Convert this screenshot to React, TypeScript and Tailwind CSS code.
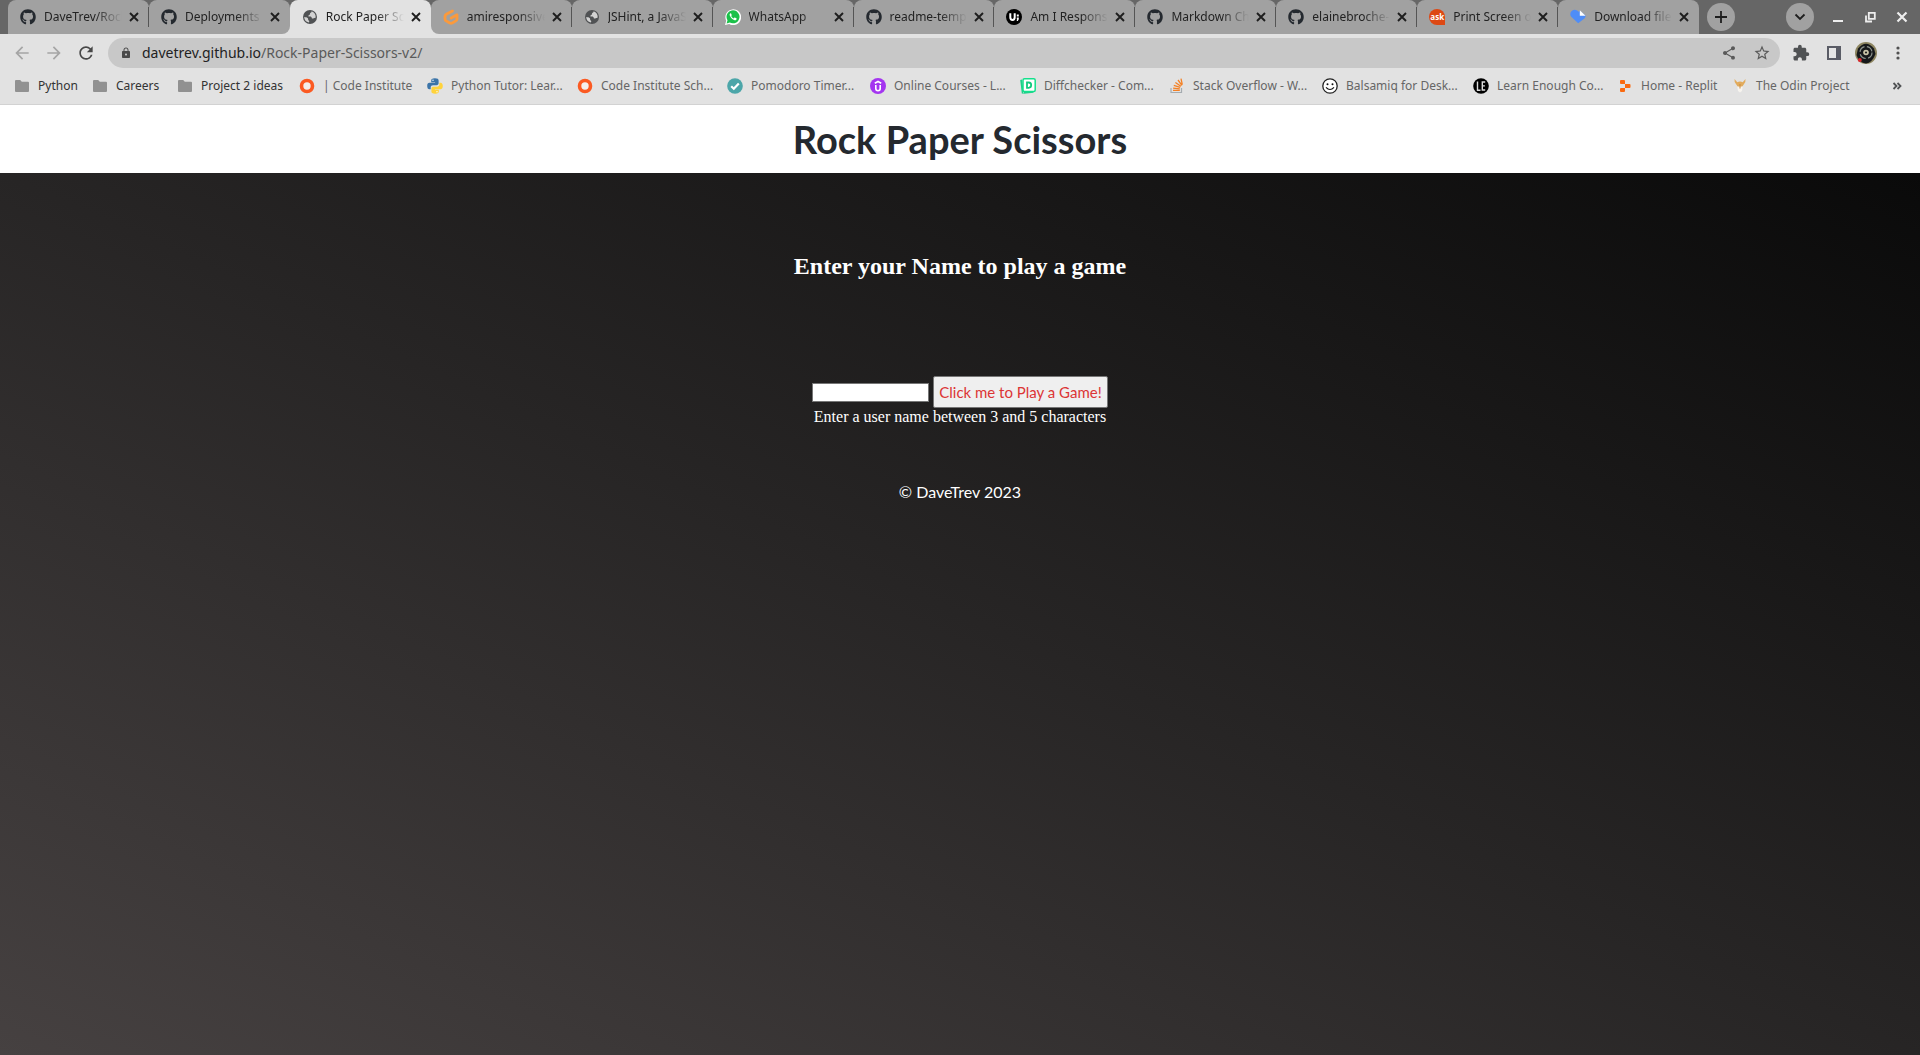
import React from "react";
import { FaGithub } from "react-icons/fa";
import { MdLock, MdShare, MdStarBorder, MdExtension, MdArrowBack, MdArrowForward, MdRefresh } from "react-icons/md";

const Globe = () => (
  <svg viewBox="0 0 16 16" className="size-4">
    <circle cx="8" cy="8" r="7" fill="#505254" />
    <path d="M9.600 2.200c.2 1.300-1 1.300-1.500 2-.4.700.400 1.200-.600 1.600-.9.300-1.200 1-1 1.600.8.300 2-.3 2.800.500.700.800.300 1.500 1 1.700 1 .200 1.600-1 3.300-.9a5.700 5.700 0 0 0-4-6.500zM2.200 8c1.500.300 3 .300 3.700 1.200.600.900-.2 1.700.800 2.300.9.500.5 1.500.2 2A5.900 5.900 0 0 1 2.200 8z" fill="#d2d2d2" />
  </svg>
);
const Github = () => <FaGithub className="size-4 text-[#24292f]" />;
const GitpodMark = () => (
  <svg viewBox="0 0 16 16" className="size-4">
    <path d="M9.500 1.900 3.300 5.200Q2 6 2 7.300v2.600q0 1.400 1.200 2l3.600 2.100q1.200.600 2.400 0l3.600-2.100q1.200-.7 1.200-2V5.800L8.200 9" fill="none" stroke="#fb9a3c" strokeWidth="2.800" strokeLinecap="round" strokeLinejoin="round" />
  </svg>
);
const WhatsApp = () => (
  <svg viewBox="0 0 16 16" className="size-4">
    <path d="M0 16l1.200-4.200A7.900 7.900 0 1 1 4.200 15z" fill="#fff" />
    <path d="M1.600 14.400l.9-3.100a6.500 6.500 0 1 1 2.300 2.200z" fill="#1bc14a" />
    <path d="M5.500 4.300c-.9.400-1.100 1.500-.6 2.500.8 1.900 2.200 3.400 4.200 4.200 1.200.5 2.200.1 2.500-1 .1-.5 0-.6-.3-.8l-1.400-.6c-.3-.1-.4 0-.6.2l-.5.600c-1.200-.4-2.100-1.300-2.600-2.300.7-.7.600-.9.400-1.300l-.5-1.200c-.1-.3-.3-.3-.6-.3z" fill="#fff" />
  </svg>
);
const UiMark = () => (
  <svg viewBox="0 0 16 16" className="size-4">
    <circle cx="8" cy="8" r="8" fill="#000" />
    <path d="M4.300 4.200v4q0 2.700 2.200 2.700t2.200-2.700v-4" fill="none" stroke="#fff" strokeWidth="2" />
    <path d="M10.800 5.500h2v2h-2zM10.800 8.600h2v1.600l-1 1.900h-1.200l.6-1.600h-.4z" fill="#fff" />
  </svg>
);
const AskMark = () => (
  <span className="flex size-4 items-center justify-center rounded-full rounded-br-none bg-[#dd4814] font-['Open_Sans',sans-serif] text-[8px] font-bold text-white">ask</span>
);
const HeartMark = () => (
  <svg viewBox="0 0 16 16" className="size-4">
    <path d="M1.200 2.500Q3 .200 6 1q1.500.400 3 2l.6-1.500 5.900 5q.4 1.200-.8 2.700L8.200 14.300 1.500 8Q-.8 5.500 1.200 2.500z" fill="#4f8df7" />
    <path d="M9.800 1.300v5.400h5.700z" fill="#fff" />
  </svg>
);

const Ring = () => (
  <svg viewBox="0 0 16 16" className="size-4">
    <circle cx="8" cy="8" r="5.500" fill="#f4efec" stroke="#fb5a22" strokeWidth="3.600" />
  </svg>
);
const Folder = () => (
  <svg viewBox="0 0 16 16" className="size-4">
    <path d="M1 3q0-1 1-1h4.200l1.600 1.800H14q1 0 1 1V13q0 1-1 1H2q-1 0-1-1z" fill="#919191" />
  </svg>
);
const Python = () => (
  <svg viewBox="0 0 16 16" className="size-4">
    <path d="M7.900.300c-3 0-3.700 1-3.700 2.200v1.700h3.900v.600H2.400C1 4.800.200 6 .200 8s.8 3.300 2.200 3.300h1.300V9.400c0-1.300 1-2.200 2.300-2.200h3.700c1.100 0 1.900-.8 1.900-1.900V2.500C11.600 1.200 10.600.300 7.900.300z" fill="#3b74a8" />
    <circle cx="6" cy="2.300" r=".7" fill="#fff" />
    <path d="M8.100 15.700c3 0 3.700-1 3.700-2.200v-1.700H7.900v-.6h5.700c1.400 0 2.200-1.200 2.200-3.200s-.8-3.300-2.200-3.300h-1.200v1.900c0 1.300-1 2.200-2.300 2.200H6.300c-1.100 0-1.900.8-1.900 1.900v2.800c0 1.300 1 2.200 3.700 2.200z" fill="#ffd33b" />
    <circle cx="10" cy="13.700" r=".7" fill="#fff" />
  </svg>
);
const Tick = () => (
  <svg viewBox="0 0 16 16" className="size-4">
    <circle cx="8" cy="8" r="7.800" fill="#4ca6a9" />
    <path d="M4.200 8.300l2.600 2.500 5-5.300" fill="none" stroke="#fff" strokeWidth="2.200" />
  </svg>
);
const Udemy = () => (
  <svg viewBox="0 0 16 16" className="size-4">
    <circle cx="8" cy="8" r="8" fill="#a435f0" />
    <path d="M5.800 7v3.600q0 2.200 2.200 2.200t2.200-2.200V7M4.800 5.300 8 3.500l3.200 1.800" fill="none" stroke="#fff" strokeWidth="1.600" />
  </svg>
);
const Diff = () => (
  <svg viewBox="0 0 16 16" className="size-4">
    <path d="M.2 2 2 1.500 4 15.800 1.800 15.500zM4 15.800l9.500-1-.2-1.500L3 14z" fill="#1fd08a" />
    <rect x="3" y=".8" width="12.200" height="12.600" rx="1.500" fill="#fff" stroke="#14e08c" strokeWidth="1.500" />
    <path d="M7 4.500h1.700q2.500 0 2.500 2.600T8.700 9.800H7z" fill="none" stroke="#12c97e" strokeWidth="1.800" />
  </svg>
);
const Stack = () => (
  <svg viewBox="0 0 16 16" className="size-4">
    <path d="M2 10v4.500h10.500V10" fill="none" stroke="#a5abb0" strokeWidth="1.200" />
    <path d="M4 12.300h6.800M4.100 10.100l6.700.7M4.800 7.300l6.400 2M6.400 4.500l5.500 3.800M9 2l3.900 5.400M12 .700l1.300 6" fill="none" stroke="#f48024" strokeWidth="1.300" />
  </svg>
);
const Smiley = () => (
  <svg viewBox="0 0 16 16" className="size-4">
    <circle cx="8" cy="8" r="7.200" fill="#fff" stroke="#222" strokeWidth="1.300" />
    <circle cx="5.500" cy="6.300" r="1" fill="#111" />
    <circle cx="10.500" cy="6.300" r="1" fill="#111" />
    <path d="M4 9.300q4 4.400 8 0" fill="none" stroke="#111" strokeWidth="1.200" />
  </svg>
);
const LearnEnough = () => (
  <svg viewBox="0 0 16 16" className="size-4">
    <circle cx="8" cy="8" r="7.800" fill="#000" />
    <path d="M4.500 3.500v8.700h3M12.200 4H9.300v8h2.900M9.300 7.900h2.600" fill="none" stroke="#ddd" strokeWidth="1.400" />
  </svg>
);
const Replit = () => (
  <svg viewBox="0 0 16 16" className="size-4">
    <path d="M3 3q0-1 1-1h3q1 0 1 1v3H4Q3 6 3 5zM8 6h4.500q1 0 1 1v2q0 1-1 1H8zM4 10h4v3q0 1-1 1H4q-1 0-1-1v-2q0-1 1-1z" fill="#fa6a10" />
  </svg>
);
const Odin = () => (
  <svg viewBox="0 0 16 16" className="size-4">
    <path d="M2.500 1 5.300 4.200Q8 3 10.700 4.200L13.500 1q.5 3.500-1.800 5.500L10 9H6L4.300 6.500Q2 4.500 2.500 1z" fill="#e2ab5c" />
    <path d="M5.300 8.500h5.400L10 13l-2 1.500L6 13z" fill="#f7f4ef" />
    <path d="M8 6v4.500" stroke="#c98b3e" strokeWidth="1" />
  </svg>
);
const Cross = () => (
  <svg viewBox="0 0 16 16" className="size-4">
    <path d="M4 4l8 8M12 4l-8 8" stroke="#1e1e1e" strokeWidth="1.900" />
  </svg>
);

const tabs = [
  { icon: Github, label: "DaveTrev/Rock-Paper" },
  { icon: Github, label: "Deployments · Dave" },
  { icon: Globe, label: "Rock Paper Scissors", active: true },
  { icon: GitpodMark, label: "amiresponsive-web" },
  { icon: Globe, label: "JSHint, a JavaScript" },
  { icon: WhatsApp, label: "WhatsApp" },
  { icon: Github, label: "readme-template/" },
  { icon: UiMark, label: "Am I Responsive?" },
  { icon: Github, label: "Markdown Cheats" },
  { icon: Github, label: "elainebroche-dev" },
  { icon: AskMark, label: "Print Screen on Ub" },
  { icon: HeartMark, label: "Download files" },
];

const bookmarks = [
  { icon: Folder, label: "Python", dark: true, w: "w-[78px]" },
  { icon: Folder, label: "Careers", dark: true, w: "w-[85px]" },
  { icon: Folder, label: "Project 2 ideas", dark: true, w: "w-[122px]" },
  { icon: Ring, label: "| Code Institute", w: "w-[128px]" },
  { icon: Python, label: "Python Tutor: Lear...", w: "w-[150px]" },
  { icon: Ring, label: "Code Institute Sch...", w: "w-[150px]" },
  { icon: Tick, label: "Pomodoro Timer...", w: "w-[143px]" },
  { icon: Udemy, label: "Online Courses - L...", w: "w-[150px]" },
  { icon: Diff, label: "Diffchecker - Com...", w: "w-[149px]" },
  { icon: Stack, label: "Stack Overflow - W...", w: "w-[153px]" },
  { icon: Smiley, label: "Balsamiq for Desk...", w: "w-[151px]" },
  { icon: LearnEnough, label: "Learn Enough Co...", w: "w-[144px]" },
  { icon: Replit, label: "Home - Replit", w: "w-[115px]" },
  { icon: Odin, label: "The Odin Project", w: "w-[130px]" },
];

function TabStrip() {
  return (
    <div className="flex h-[34px] items-stretch bg-[#666666] pl-2">
      <div role="tablist" className="flex min-w-0 flex-[0_1_1691px]">
        {tabs.map((t, i) => {
          const Icon = t.icon;
          const divider = !t.active && i !== 1 && i !== tabs.length - 1;
          return (
            <div
              key={t.label}
              className={
                i === 1 || i === 3
                  ? "flex min-w-0 flex-1 bg-[linear-gradient(#666666_50%,#e2e2e2_50%)]"
                  : t.active
                    ? "flex min-w-0 flex-1 bg-[#666666]"
                    : "flex min-w-0 flex-1 bg-[linear-gradient(#666666_50%,#a1a1a1_50%)]"
              }
            >
              <div
                className={
                  t.active
                    ? "flex min-w-0 flex-1 items-center rounded-t-lg bg-[#e2e2e2] pr-[7px] pl-3"
                    : i === 1
                      ? "flex min-w-0 flex-1 items-center rounded-t-lg rounded-br-lg bg-[#a1a1a1] pr-[7px] pl-3"
                      : i === 3
                        ? "flex min-w-0 flex-1 items-center rounded-t-lg rounded-bl-lg bg-[#a1a1a1] pr-[7px] pl-3"
                        : "flex min-w-0 flex-1 items-center rounded-t-lg bg-[#a1a1a1] pr-[7px] pl-3"
                }
              >
                <button role="tab" aria-selected={!!t.active} className="flex min-w-0 flex-1 items-center gap-2 text-left">
                  <span className="shrink-0"><Icon /></span>
                  <span className="min-w-0 flex-1 overflow-hidden text-[12px] leading-5 whitespace-nowrap text-[#222222] [mask-image:linear-gradient(to_right,#000_65%,transparent)]">{t.label}</span>
                </button>
                <button aria-label={"Close " + t.label} className="ml-1 shrink-0"><Cross /></button>
              </div>
              {divider && <span className="-ml-px h-5 w-px self-center bg-[#555555]" />}
            </div>
          );
        })}
      </div>
      <div className="flex flex-1 items-center pl-2">
        <button aria-label="New tab" className="flex size-7 items-center justify-center rounded-full bg-[#a1a1a1]">
          <svg viewBox="0 0 16 16" className="size-4"><path d="M8 2v12M2 8h12" stroke="#1e1e1e" strokeWidth="1.800" /></svg>
        </button>
        <div className="ml-auto flex items-center gap-4 pr-[10px]">
          <button aria-label="Search tabs" className="flex size-7 items-center justify-center rounded-full bg-[#a1a1a1]">
            <svg viewBox="0 0 16 16" className="size-4"><path d="M3.500 5.500 8 10l4.500-4.500" fill="none" stroke="#1e1e1e" strokeWidth="1.800" /></svg>
          </button>
          <button aria-label="Minimize">
            <svg viewBox="0 0 16 16" className="size-4"><path d="M3 12h10" stroke="#eee" strokeWidth="2" /></svg>
          </button>
          <button aria-label="Restore">
            <svg viewBox="0 0 16 16" className="size-4"><path d="M6.800 3.800h6v6h-6zM4 6.500v6h6" fill="none" stroke="#eee" strokeWidth="1.800" /></svg>
          </button>
          <button aria-label="Close window">
            <svg viewBox="0 0 16 16" className="size-4"><path d="M3.500 3.500l9 9M12.500 3.500l-9 9" stroke="#eee" strokeWidth="2.200" /></svg>
          </button>
        </div>
      </div>
    </div>
  );
}

function Toolbar() {
  return (
    <div className="flex h-[38px] items-center px-3">
      <button aria-label="Back" className="mr-3"><MdArrowBack className="size-5 text-[#a5a5a5]" /></button>
      <button aria-label="Forward" className="mr-3"><MdArrowForward className="size-5 text-[#a5a5a5]" /></button>
      <button aria-label="Reload" className="mr-3"><MdRefresh className="size-5 text-[#474747]" /></button>
      <div className="flex h-[30px] flex-1 items-center rounded-full bg-[#c8c8c8] pr-[9px] pl-3">
        <MdLock className="size-3 text-[#4a4a4a]" />
        <a href="https://davetrev.github.io/Rock-Paper-Scissors-v2/" className="ml-[10px] flex-1 text-[14px] leading-5 text-[#5a5a5a]">
          <span className="text-[#222222]">davetrev.github.io</span>/Rock-Paper-Scissors-v2/
        </a>
        <button aria-label="Share" className="mr-4"><MdShare className="size-4 text-[#5a5a5a]" /></button>
        <button aria-label="Bookmark"><MdStarBorder className="size-[18px] text-[#5a5a5a]" /></button>
      </div>
      <button aria-label="Extensions" className="ml-3"><MdExtension className="size-[18px] text-[#505254]" /></button>
      <button aria-label="Side panel" className="ml-4">
        <svg viewBox="0 0 16 16" className="size-4"><path d="M2 2h12v12H2z" fill="#e6e6e6" stroke="#5a5c66" strokeWidth="2" /><path d="M10 2h4v12h-4z" fill="#5a5c66" /></svg>
      </button>
      <button aria-label="Profile" className="ml-[13px]">
        <svg viewBox="0 0 22 22" className="size-[22px]">
          <circle cx="11" cy="11" r="11" fill="#8d8560" />
          <path d="M3 6.500Q11-3 19 6.500l1.500 5.500Q17 21 11 21.500 4 21 1.500 13z" fill="#16181a" />
          <circle cx="11" cy="10.500" r="6" fill="none" stroke="#8d938d" strokeWidth="1.200" strokeDasharray="7 2.500" />
          <circle cx="11" cy="10.500" r="2.800" fill="#c9c5a8" />
          <circle cx="11" cy="10.500" r="1.100" fill="#222" />
          <circle cx="4.800" cy="18" r="2" fill="#d92a2e" />
        </svg>
      </button>
      <button aria-label="Menu" className="ml-[13px]">
        <svg viewBox="0 0 16 16" className="size-4"><circle cx="8" cy="3" r="1.600" fill="#505050" /><circle cx="8" cy="8" r="1.600" fill="#505050" /><circle cx="8" cy="13" r="1.600" fill="#505050" /></svg>
      </button>
      <span className="w-[2px]" />
    </div>
  );
}

function Bookmarks() {
  return (
    <nav aria-label="Bookmarks" className="flex h-[33px] items-center border-b border-[#d2d2d2] pr-[15px] pb-1 pl-[14px] text-[12px]">
      {bookmarks.map((b) => {
        const Icon = b.icon;
        return (
          <a key={b.label} href="#" className={b.w + " flex shrink-0 items-center gap-2 whitespace-nowrap " + (b.dark ? "text-[#333333]" : "text-[#666666]")}>
            <Icon />{b.label}
          </a>
        );
      })}
      <button aria-label="More bookmarks" className="ml-auto">
        <svg viewBox="0 0 16 16" className="size-4"><path d="M4.500 5 7.500 8l-3 3M8.500 5l3 3-3 3" fill="none" stroke="#505254" strokeWidth="1.800" /></svg>
      </button>
    </nav>
  );
}

export default function App() {
  return (
    <div className="flex min-h-screen flex-col">
      <div className="bg-[#e2e2e2] font-['Noto_Sans',sans-serif]">
        <TabStrip />
        <Toolbar />
        <Bookmarks />
      </div>
      <header className="flex h-[68px] items-center justify-center bg-white">
        <h1 className="font-['Lato',sans-serif] text-[38px] font-bold text-[#24292f]">Rock Paper Scissors</h1>
      </header>
      <main className="flex flex-1 flex-col items-center bg-[linear-gradient(to_top_right,#464141,#272525_50%,#0a0a0a)] font-['Liberation_Serif',serif] text-white">
        <h2 className="mt-[79px] text-[24px] leading-7 font-bold">Enter your Name to play a game</h2>
        <form className="mt-24 flex flex-col items-center" onSubmit={(e) => e.preventDefault()}>
          <div className="flex items-center gap-1">
            <input id="username" type="text" className="h-[19px] w-[117px] border border-[#767676] bg-white text-[13px] text-black" />
            <button className="h-8 rounded-[2px] border border-[#767676] bg-[#efefef] px-[5px] font-['Lato',sans-serif] text-[15px] text-[#dc3535]">Click me to Play a Game!</button>
          </div>
          <label htmlFor="username" className="text-[16px] leading-[18px]">Enter a user name between 3 and 5 characters</label>
        </form>
        <footer className="mt-[54px] font-['Lato',sans-serif] text-[16px] leading-6">© DaveTrev 2023</footer>
      </main>
    </div>
  );
}
